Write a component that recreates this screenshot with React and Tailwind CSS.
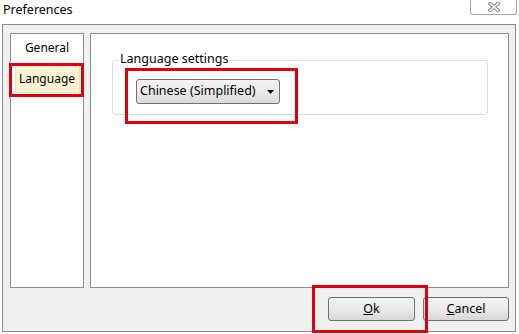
/**
 * Preferences dialog (Windows 7 style) with red annotation boxes.
 */
function CloseGlyph() {
  return (
    <svg width="12" height="10" viewBox="0 0 12 10">
      <path d="M2 1.5L10 8.5M10 1.5L2 8.5" stroke="#8f8f8f" strokeWidth="3.6" strokeLinecap="square" />
      <path d="M2 1.5L10 8.5M10 1.5L2 8.5" stroke="#ffffff" strokeWidth="1.4" strokeLinecap="square" />
    </svg>
  );
}

function App() {
  return (
    <div
      className="relative h-[334px] w-[519px] overflow-hidden bg-white text-[12px] text-black"
      style={{ fontFamily: '"Noto Sans", "Open Sans", sans-serif' }}
    >
      {/* Title bar */}
      <div className="flex h-[24px] items-start">
        <span className="pl-[3px] pt-[1px] text-[12.5px] leading-[18px]">Preferences</span>
        <button className="ml-auto mr-[2px] flex h-[15px] w-[47px] items-center justify-center rounded-b-[3px] border border-t-0 border-[#a7a7a7] bg-white">
          <CloseGlyph />
        </button>
      </div>

      {/* Frame */}
      <div className="ml-[2px] mr-[3px] flex h-[308px] flex-col border border-[#8c8c8c] bg-[#f0f0f0] pl-[7px] pr-[6px] pt-[8px]">
        <div className="flex h-[255px] gap-[6px]">
          {/* Page list */}
          <div className="flex w-[74px] flex-col items-center border border-[#8e8e8e] bg-white pt-[3px]">
            <div className="h-[22px] leading-[22px]">General</div>
            <div className="mt-[6px] h-[28px] w-[65px] border border-[#f6e3b0] bg-[#fdf2d2] text-center leading-[26px]">
              Language
            </div>
          </div>

          {/* Page content */}
          <div className="flex-1 border border-[#8e8e8e] bg-white pl-[21px] pr-[20px] pt-[26px]">
            <div className="relative h-[55px] rounded-[3px] border border-[#dcdcdc]">
              <span className="absolute left-[6px] top-[-11px] bg-white px-[1px] text-[12.5px] leading-[18px]">
                Language settings
              </span>
              <div className="pl-[23px] pt-[18px]">
                <div className="flex h-[25px] w-[144px] items-center rounded-[3px] border border-[#707070] bg-gradient-to-b from-[#f4f4f4] via-[#ebebeb] to-[#d9d9d9] pl-[3px] pr-[5px]">
                  <span className="text-[12.5px]">Chinese (Simplified)</span>
                  <svg className="ml-auto" width="7" height="4" viewBox="0 0 7 4">
                    <path d="M0 0h7L3.5 4z" fill="#000" />
                  </svg>
                </div>
              </div>
            </div>
          </div>
        </div>

        {/* Buttons */}
        <div className="mt-[9px] flex justify-end gap-[8px]">
          <button className="h-[24px] w-[87px] rounded-[3px] border border-[#707070] bg-gradient-to-b from-[#f2f2f2] via-[#ebebeb] to-[#d6d6d6] text-[12.5px]">
            <span className="underline">O</span>k
          </button>
          <button className="h-[24px] w-[86px] rounded-[3px] border border-[#707070] bg-gradient-to-b from-[#f2f2f2] via-[#ebebeb] to-[#d6d6d6] text-[12.5px]">
            <span className="underline">C</span>ancel
          </button>
        </div>
      </div>

      {/* Red annotation boxes */}
      <div className="absolute left-[9px] top-[63px] h-[34px] w-[75px] border-[3px] border-[#e0000a]" />
      <div className="absolute left-[125px] top-[68px] h-[56px] w-[173px] border-[3px] border-[#e0000a]" />
      <div className="absolute left-[312px] top-[285px] h-[48px] w-[116px] border-[3px] border-[#e0000a]" />
    </div>
  );
}

export default App;
